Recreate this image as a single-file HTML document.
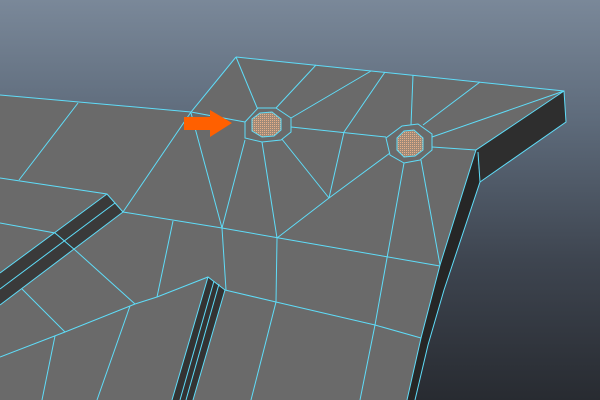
<!DOCTYPE html>
<html><head><style>html,body{margin:0;padding:0;width:600px;height:400px;overflow:hidden}
body{background:linear-gradient(#7a8899 0%,#5e6b7b 30%,#3e4550 65%,#282b31 100%)}</style></head>
<body>
<svg width="600" height="400" viewBox="0 0 600 400" xmlns="http://www.w3.org/2000/svg">
<defs><pattern id="d" width="2" height="2" patternUnits="userSpaceOnUse"><rect width="2" height="2" fill="#a08a78"/><rect width="1" height="1" fill="#e8b088"/></pattern></defs>
<polygon points="0,95 191,112 236,57 564,91 566,122 480,182 444,290 428,345 415,400 0,400" fill="#6a6a6a"/>
<polygon points="564,91 566,122 480,182 476,150" fill="#2e2e2e"/>
<polygon points="476,150 480,182 444,290 428,345 415,400 407,400 421,338 440,265" fill="#262626"/>
<polygon points="107,194 123,212 0,305 0,273" fill="#3a3a3a"/>
<polygon points="208,277 225,290 193,400 172,400" fill="#333"/>
<g stroke="#5fdcf8" stroke-width="1" fill="none">
<polyline points="0,95 191,112 245,122"/>
<polyline points="291,127 386,137"/>
<polyline points="432,147 476,150"/>
<polyline points="236,57 564,91 566,122 480,182"/>
<polyline points="564,91 476,150 440,265 421,338 407,400"/>
<polyline points="478,152 480,182 444,290 428,345 415,400"/>
<polyline points="236,57 191,112 123,212"/>
<line x1="236" y1="57" x2="258" y2="110"/>
<line x1="316" y1="65" x2="276" y2="108"/>
<line x1="371" y1="71" x2="291" y2="118"/>
<polyline points="385,72 344,132 329,198"/>
<line x1="413" y1="75" x2="411" y2="125"/>
<line x1="480" y1="82" x2="423" y2="125"/>
<line x1="564" y1="91" x2="432" y2="137"/>
<polyline points="245,140 222,228 226,290"/>
<polyline points="191,113 222,228"/>
<polyline points="262,142 277,238 276,302 251,400"/>
<line x1="281" y1="138" x2="329" y2="198"/>
<polyline points="404,163 387,258 375,325 360,400"/>
<line x1="421" y1="160" x2="440" y2="265"/>
<polyline points="390,153 329,198 277,238"/>
<polyline points="123,212 222,228 279,238 440,266"/>
<polyline points="0,178 107,194 123,212"/>
<polyline points="0,223 55,233 75,250"/>
<polyline points="107,194 0,273"/>
<polyline points="123,212 0,305"/>
<polyline points="115,203 0,289"/>
<line x1="78" y1="103" x2="19" y2="180"/>
<line x1="173" y1="221" x2="157" y2="297"/>
<polyline points="75,250 135,304"/>
<polyline points="22,289 65,332"/>
<polyline points="0,357 65,332 135,304 157,297 208,277 225,290"/>
<line x1="130" y1="306" x2="97" y2="400"/>
<line x1="55" y1="336" x2="42" y2="400"/>
<polyline points="225,290 276,302 375,325 421,338"/>
<polyline points="208,277 172,400"/>
<polyline points="225,290 193,400"/>
<polyline points="214,281 180,400"/>
<polyline points="219,284 186,400"/>
</g>
<g stroke="#5fdcf8" stroke-width="1">
<polygon points="258,108 276,108 291,118 291,132 281,140 262,142 245,138 245,122" fill="#6a6a6a"/>
<polygon points="260,113 272,112 281,119 281,130 274,136 262,137 252,131 252,119" fill="url(#d)"/>
<polygon points="402,126 418,124 432,134 432,150 420,160 404,163 390,155 386,138" fill="#6a6a6a"/>
<polygon points="404,131 414,130 423,138 423,150 415,156 404,157 397,150 397,138" fill="url(#d)"/>
</g>
<polygon points="184,117 210,117 210,110 232,123 210,137 210,130 184,130" fill="#ff6000"/>
</svg>
</body></html>
